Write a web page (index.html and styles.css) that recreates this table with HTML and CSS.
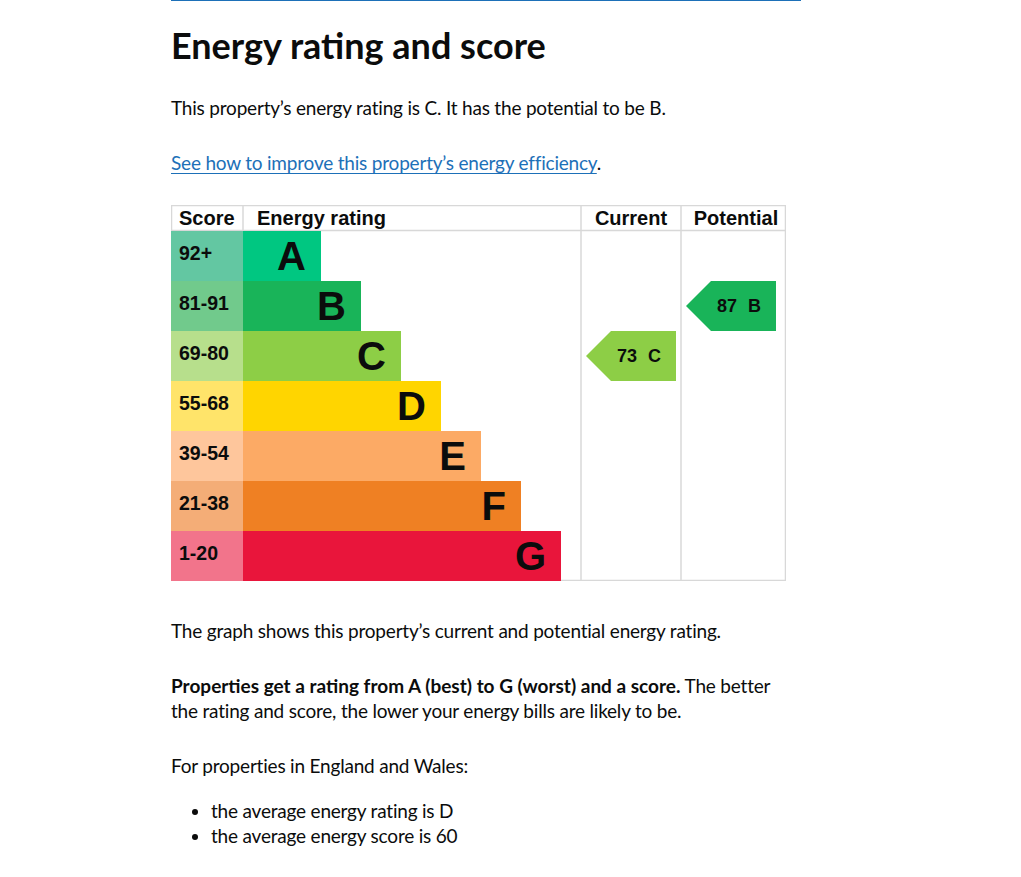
FILE: index.html
```html
<!DOCTYPE html>
<html lang="en">
<head>
<meta charset="utf-8">
<title>Energy rating and score</title>
<link rel="stylesheet" href="styles.css">
</head>
<body>
<main class="page">
  <section class="section">
    <h1 class="heading">Energy rating and score</h1>
    <p class="body">This property’s energy rating is C. It has the potential to be B.</p>
    <p class="body"><a class="link" href="#improve">See how to improve this property’s energy efficiency</a>.</p>

    <svg class="epc" width="615" height="376" viewBox="0 0 615 376" role="img" aria-label="Energy rating graph">
      <g class="grid">
        <line x1="0" y1="0.5" x2="615" y2="0.5"/>
        <line x1="0" y1="25.5" x2="615" y2="25.5"/>
        <line x1="0" y1="375.5" x2="615" y2="375.5"/>
        <line x1="0.5" y1="0" x2="0.5" y2="25"/>
        <line x1="72" y1="0" x2="72" y2="25"/>
        <line x1="410" y1="0" x2="410" y2="376"/>
        <line x1="510" y1="0" x2="510" y2="376"/>
        <line x1="614.5" y1="0" x2="614.5" y2="376"/>
      </g>
      <g class="head">
        <text x="8" y="20">Score</text>
        <text x="86" y="20">Energy rating</text>
        <text x="460" y="20" text-anchor="middle">Current</text>
        <text x="565" y="20" text-anchor="middle">Potential</text>
      </g>

      <rect class="s-a" x="0" y="26" width="72" height="50"/>
      <rect class="b-a" x="72" y="26" width="78" height="50"/>
      <rect class="s-b" x="0" y="76" width="72" height="50"/>
      <rect class="b-b" x="72" y="76" width="118" height="50"/>
      <rect class="s-c" x="0" y="126" width="72" height="50"/>
      <rect class="b-c" x="72" y="126" width="158" height="50"/>
      <rect class="s-d" x="0" y="176" width="72" height="50"/>
      <rect class="b-d" x="72" y="176" width="198" height="50"/>
      <rect class="s-e" x="0" y="226" width="72" height="50"/>
      <rect class="b-e" x="72" y="226" width="238" height="50"/>
      <rect class="s-f" x="0" y="276" width="72" height="50"/>
      <rect class="b-f" x="72" y="276" width="278" height="50"/>
      <rect class="s-g" x="0" y="326" width="72" height="50"/>
      <rect class="b-g" x="72" y="326" width="318" height="50"/>

      <g class="score">
        <text x="8" y="55">92+</text>
        <text x="8" y="105">81-91</text>
        <text x="8" y="155">69-80</text>
        <text x="8" y="205">55-68</text>
        <text x="8" y="255">39-54</text>
        <text x="8" y="305">21-38</text>
        <text x="8" y="355">1-20</text>
      </g>
      <g class="letter">
        <text x="135" y="65">A</text>
        <text x="175" y="115">B</text>
        <text x="215" y="165">C</text>
        <text x="255" y="215">D</text>
        <text x="295" y="265">E</text>
        <text x="335" y="315">F</text>
        <text x="375" y="365">G</text>
      </g>

      <polygon class="b-c" points="415,151 440,126 505,126 505,176 440,176"/>
      <text class="arrow-text" x="446" y="157">73</text>
      <text class="arrow-text" x="490" y="157" text-anchor="end">C</text>

      <polygon class="b-b" points="515,101 540,76 605,76 605,126 540,126"/>
      <text class="arrow-text" x="546" y="107">87</text>
      <text class="arrow-text" x="590" y="107" text-anchor="end">B</text>
    </svg>

    <p class="body body-chart">The graph shows this property’s current and potential energy rating.</p>
    <p class="body body-narrow"><strong class="bold">Properties get a rating from A (best) to G (worst) and a score.</strong> The better the rating and score, the lower your energy bills are likely to be.</p>
    <p class="body body-tight">For properties in England and Wales:</p>
    <ul class="list">
      <li>the average energy rating is D</li>
      <li>the average energy score is 60</li>
    </ul>
  </section>
</main>
</body>
</html>
```
FILE: styles.css
```css
html, body {
  margin: 0;
  padding: 0;
  background: #ffffff;
}

body {
  font-family: "Lato", "Liberation Sans", Arial, sans-serif;
  color: #0b0c0c;
}

.page {
  width: 630px;
  margin-left: 171px;
}

.section {
  border-top: 1px solid #1d70b8;
}

.heading {
  font-size: 36px;
  line-height: 40px;
  font-weight: 700;
  margin: 24px 0 30px;
}

.body {
  font-size: 19px;
  line-height: 25px;
  letter-spacing: -0.2px;
  margin: 0 0 30px;
}

.body-chart {
  margin-top: 37px;
}

.body-narrow {
  max-width: 615px;
}

.body-tight {
  margin-bottom: 20px;
}

.bold {
  font-weight: 700;
  letter-spacing: 0;
}

.link {
  color: #1d70b8;
  text-decoration: underline;
  text-decoration-thickness: 1px;
  text-underline-offset: 3px;
}

.epc {
  display: block;
  font-family: "Liberation Sans", Arial, sans-serif;
  font-weight: 700;
}

.grid line {
  stroke: #d8d8d8;
  stroke-width: 1.5;
}

.head text {
  font-size: 20px;
  fill: #0b0c0c;
}

.score text {
  font-size: 19.5px;
  fill: #0b0c0c;
}

.letter text {
  font-size: 40px;
  text-anchor: end;
  fill: #0b0c0c;
}

.arrow-text {
  font-size: 18px;
  fill: #0b0c0c;
}

.b-a { fill: #00c781; }
.b-b { fill: #19b459; }
.b-c { fill: #8dce46; }
.b-d { fill: #ffd500; }
.b-e { fill: #fcaa65; }
.b-f { fill: #ef8023; }
.b-g { fill: #e9153b; }

.s-a { fill: #63c7a2; }
.s-b { fill: #71ca8c; }
.s-c { fill: #b7df8c; }
.s-d { fill: #ffe46a; }
.s-e { fill: #fec69c; }
.s-f { fill: #f4ad77; }
.s-g { fill: #f2748b; }

.list {
  font-size: 19px;
  line-height: 25px;
  letter-spacing: -0.2px;
  margin: 0;
  padding-left: 40px;
  list-style: disc;
}
```
